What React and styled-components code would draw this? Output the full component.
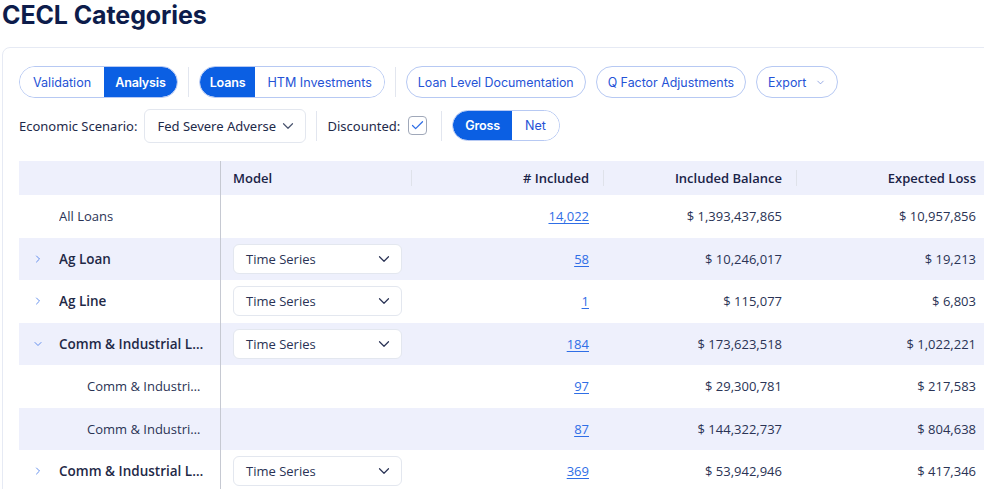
import React from "react";
import styled, { createGlobalStyle } from "styled-components";
import { ChevronDown, ChevronRight, Check } from "lucide-react";

const GlobalStyle = createGlobalStyle`
  body {
    margin: 0;
    background: #fff;
    overflow: hidden;
    font-family: "Noto Sans", sans-serif;
  }
`;

const Page = styled("div")`
  padding: 0 0 0 2px;
  width: 1100px;
`;

const Title = styled("h1")`
  margin: 0;
  padding-top: 1px;
  height: 46px;
  font-family: Inter, sans-serif;
  font-weight: 700;
  font-size: 25px;
  line-height: 28px;
  color: #0d1c4b;
  letter-spacing: -0.1px;
`;

const Card = styled("div")`
  border: 1px solid #e6eaf4;
  border-radius: 8px;
  padding: 18px 0 0 16px;
  width: 1040px;
  min-height: 460px;
`;

const Toolbar = styled("div")`
  display: flex;
  align-items: center;
  gap: 10px;
  height: 32px;
  margin-bottom: 11px;
`;

const Segmented = styled("div")`
  display: flex;
  height: ${p => p.$h || 32}px;
  border: 1px solid #b7c9f3;
  border-radius: 16px;
  overflow: hidden;
  box-sizing: border-box;
`;

const Segment = styled("button")`
  border: 0;
  margin: 0;
  padding: 0 ${p => p.$pad || 12}px;
  font-family: Inter, sans-serif;
  font-size: 12.6px;
  font-weight: ${p => (p.$active ? 600 : 400)};
  letter-spacing: ${p => (p.$active ? "-0.2px" : "0")};
  background: ${p => (p.$active ? "#0b5fe3" : "#fff")};
  color: ${p => (p.$active ? "#fff" : "#2553d6")};
  border-radius: 0;
  ${p => p.$active && p.$first && "border-radius: 0 16px 16px 0;"}
  ${p => p.$active && p.$left && "border-radius: 16px 0 0 16px;"}
`;

const PillButton = styled("button")`
  height: 32px;
  box-sizing: border-box;
  border: 1px solid #b7c9f3;
  border-radius: 16px;
  background: #fff;
  padding: 0 11px;
  font-family: Inter, sans-serif;
  font-size: 12.4px;
  color: #2553d6;
  display: flex;
  align-items: center;
  gap: 9px;
`;

const Divider = styled("span")`
  width: 1px;
  height: 30px;
  background: #e2e6ef;
  margin-left: ${p => p.$ml || 0}px;
`;

const FilterRow = styled("div")`
  display: flex;
  align-items: center;
  gap: 10px;
  height: 33px;
  margin-bottom: 19px;
`;

const Label = styled("span")`
  font-size: 13px;
  color: #1e2a4a;
  margin-right: ${p => p.$mr || 0}px;
`;

const Select = styled("div")`
  display: flex;
  align-items: center;
  justify-content: space-between;
  box-sizing: border-box;
  width: ${p => p.$w}px;
  height: ${p => p.$h}px;
  border: 1px solid #e3e7ef;
  border-radius: 6px;
  background: #fff;
  padding: 0 ${p => p.$pr || 8}px 0 12px;
  font-size: 13px;
  color: ${p => p.$color || "#1e2a4a"};
`;

const CheckBox = styled("span")`
  width: 19px;
  height: 19px;
  box-sizing: border-box;
  border: 1px solid #a0a8b9;
  border-radius: 4px;
  display: flex;
  align-items: center;
  justify-content: center;
  margin-left: -2px;
`;

const Table = styled("div")`
  width: 971px;
  font-family: "Open Sans", "Noto Sans", sans-serif;
  font-size: 13px;
  color: #2a3355;
`;

const Row = styled("div")`
  display: grid;
  grid-template-columns: 202px 190px 192px 193px 194px;
  height: ${p => (p.$header ? 34 : 42.5)}px;
  background: ${p => (p.$shade ? "#eef0fc" : "#fff")};
  align-items: center;
`;

const Cell = styled("div")`
  height: 100%;
  display: flex;
  align-items: center;
  justify-content: ${p => (p.$right ? "flex-end" : "flex-start")};
  padding: 0 ${p => (p.$right ? 14 : 0)}px 0 ${p => p.$pl || 0}px;
  position: relative;
  box-sizing: border-box;
  min-width: 0;
`;

const NameCell = styled(Cell)`
  border-right: 1px solid #c6c9d2;
  padding-left: ${p => p.$pl}px;
`;

const HeadText = styled("span")`
  font-weight: 600;
  font-size: 13px;
  color: #1a2347;
`;

const HeadSep = styled("span")`
  position: absolute;
  left: 0;
  top: 9px;
  height: 16px;
  width: 1px;
  background: #dfe2ea;
`;

const Toggle = styled("span")`
  width: 27px;
  flex: none;
  display: flex;
  color: #3d74e8;
`;

const Name = styled("span")`
  font-weight: ${p => (p.$bold ? 600 : 400)};
  font-size: ${p => (p.$bold ? 13.5 : 13)}px;
  color: ${p => (p.$bold ? "#1f2947" : "#2a3355")};
  white-space: nowrap;
  overflow: hidden;
  text-overflow: ellipsis;
  max-width: ${p => p.$max}px;
`;

const CountLink = styled("a")`
  color: #2f6ee6;
  text-decoration: underline;
  text-underline-offset: 2px;
`;

const rows = [
  { name: "All Loans", count: "14,022", bal: "$ 1,393,437,865", loss: "$ 10,957,856" },
  { name: "Ag Loan", bold: true, toggle: "right", model: true, count: "58", bal: "$ 10,246,017", loss: "$ 19,213" },
  { name: "Ag Line", bold: true, toggle: "right", model: true, count: "1", bal: "$ 115,077", loss: "$ 6,803" },
  { name: "Comm & Industrial Loans", bold: true, toggle: "down", model: true, count: "184", bal: "$ 173,623,518", loss: "$ 1,022,221" },
  { name: "Comm & Industrial Loans Fixed", child: true, count: "97", bal: "$ 29,300,781", loss: "$ 217,583" },
  { name: "Comm & Industrial Loans Variable", child: true, count: "87", bal: "$ 144,322,737", loss: "$ 804,638" },
  { name: "Comm & Industrial Lines", bold: true, toggle: "right", model: true, count: "369", bal: "$ 53,942,946", loss: "$ 417,346" }
];

const App = () => (
  <Page>
    <GlobalStyle />
    <Title>CECL Categories</Title>
    <Card>
      <Toolbar>
        <Segmented>
          <Segment $pad={13}>Validation</Segment>
          <Segment $active $first $pad={11}>Analysis</Segment>
        </Segmented>
        <Divider />
        <Segmented>
          <Segment $active $left $pad={10}>Loans</Segment>
          <Segment $pad={12}>HTM Investments</Segment>
        </Segmented>
        <Divider />
        <PillButton>Loan Level Documentation</PillButton>
        <PillButton>Q Factor Adjustments</PillButton>
        <PillButton>
          Export <ChevronDown size={11} strokeWidth={1.5} color="#6b86d8" />
        </PillButton>
      </Toolbar>
      <FilterRow>
        <Label $mr={-3}>Economic Scenario:</Label>
        <Select $w={162} $h={34}>
          Fed Severe Adverse
          <ChevronDown size={18} strokeWidth={1.6} color="#4b5570" />
        </Select>
        <Divider />
        <Label>Discounted:</Label>
        <CheckBox>
          <Check size={15} strokeWidth={2} color="#2f6ee6" />
        </CheckBox>
        <Divider $ml={4} />
        <Segmented $h={31}>
          <Segment $active $left $pad={12}>Gross</Segment>
          <Segment $pad={13}>Net</Segment>
        </Segmented>
      </FilterRow>
      <Table>
        <Row $header $shade>
          <NameCell $pl={0} />
          <Cell $pl={12}>
            <HeadText>Model</HeadText>
          </Cell>
          <Cell $right>
            <HeadSep />
            <HeadText># Included</HeadText>
          </Cell>
          <Cell $right>
            <HeadSep />
            <HeadText>Included Balance</HeadText>
          </Cell>
          <Cell $right>
            <HeadSep />
            <HeadText>Expected Loss</HeadText>
          </Cell>
        </Row>
        {rows.map((r, i) => (
          <Row key={i} $shade={i % 2 === 1}>
            <NameCell $pl={r.child ? 68 : 13}>
              {!r.child && (
                <Toggle>
                  {r.toggle === "right" && <ChevronRight size={12} strokeWidth={1.6} />}
                  {r.toggle === "down" && <ChevronDown size={12} strokeWidth={1.6} />}
                </Toggle>
              )}
              <Name $bold={r.bold} $max={r.child ? 118 : 147}>
                {r.name}
              </Name>
            </NameCell>
            <Cell $pl={12}>
              {r.model && (
                <Select $w={169} $h={30} $pr={8} $color="#2a3355">
                  Time Series
                  <ChevronDown size={18} strokeWidth={1.6} color="#2a3355" />
                </Select>
              )}
            </Cell>
            <Cell $right>
              <CountLink href="#">{r.count}</CountLink>
            </Cell>
            <Cell $right>{r.bal}</Cell>
            <Cell $right>{r.loss}</Cell>
          </Row>
        ))}
      </Table>
    </Card>
  </Page>
);

export default App;
